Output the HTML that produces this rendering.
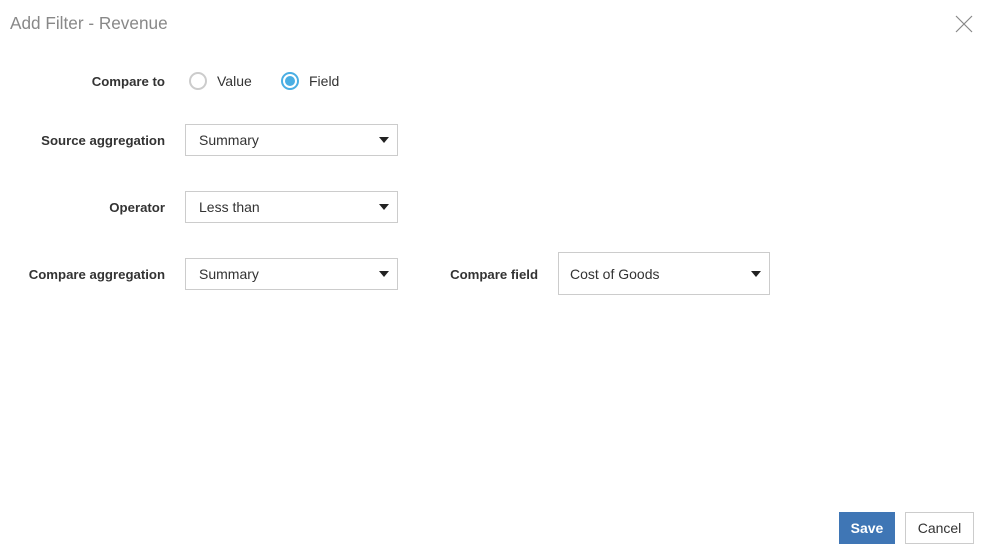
<!DOCTYPE html>
<html><head><style>
body{margin:0;width:987px;height:552px;background:#fff;font-family:"Liberation Sans",sans-serif;position:relative;overflow:hidden}
.a{position:absolute}
.t{left:10px;top:13px;font-size:17.2px;color:#888}
.l{font-size:13.2px;font-weight:bold;color:#333;text-align:right;width:200px}
.s{border:1px solid #ccc;box-sizing:border-box;font-size:14px;color:#333;padding-left:13px}
.s:after{content:"";position:absolute;right:8px;top:50%;margin-top:-3px;border-left:5px solid transparent;border-right:5px solid transparent;border-top:6px solid #222}
.r{width:18px;height:18px;border-radius:50%;box-sizing:border-box}
.txt{font-size:14px;color:#333}
.b{font-size:14px;box-sizing:border-box;text-align:center}
</style></head><body>
<div class="a t">Add Filter - Revenue</div>
<svg class="a" style="left:955px;top:15px" width="18" height="18"><path d="M1 1L17 17M17 1L1 17" stroke="#888" stroke-width="1.2"/></svg>

<div class="a l" style="left:-35px;top:74px">Compare to</div>
<div class="a r" style="left:189px;top:72px;border:2px solid #ccc"></div>
<div class="a txt" style="left:217px;top:73px">Value</div>
<div class="a r" style="left:281px;top:72px;border:2px solid #4aaee3"></div>
<div class="a" style="left:285px;top:76px;width:10px;height:10px;border-radius:50%;background:#4aaee3"></div>
<div class="a txt" style="left:309px;top:73px">Field</div>

<div class="a l" style="left:-35px;top:133px">Source aggregation</div>
<div class="a s" style="left:185px;top:124px;width:213px;height:32px;line-height:30px">Summary</div>

<div class="a l" style="left:-35px;top:200px">Operator</div>
<div class="a s" style="left:185px;top:191px;width:213px;height:32px;line-height:30px">Less than</div>

<div class="a l" style="left:-35px;top:267px">Compare aggregation</div>
<div class="a s" style="left:185px;top:258px;width:213px;height:32px;line-height:30px">Summary</div>

<div class="a l" style="left:338px;top:267px">Compare field</div>
<div class="a s" style="left:558px;top:252px;width:212px;height:43px;line-height:42px;padding-left:11px">Cost of Goods</div>

<div class="a b" style="left:839px;top:512px;width:56px;height:32px;line-height:32px;background:#3f76b5;color:#fff;font-weight:bold">Save</div>
<div class="a b" style="left:905px;top:512px;width:69px;height:32px;line-height:30px;border:1px solid #ccc;color:#333">Cancel</div>
</body></html>
